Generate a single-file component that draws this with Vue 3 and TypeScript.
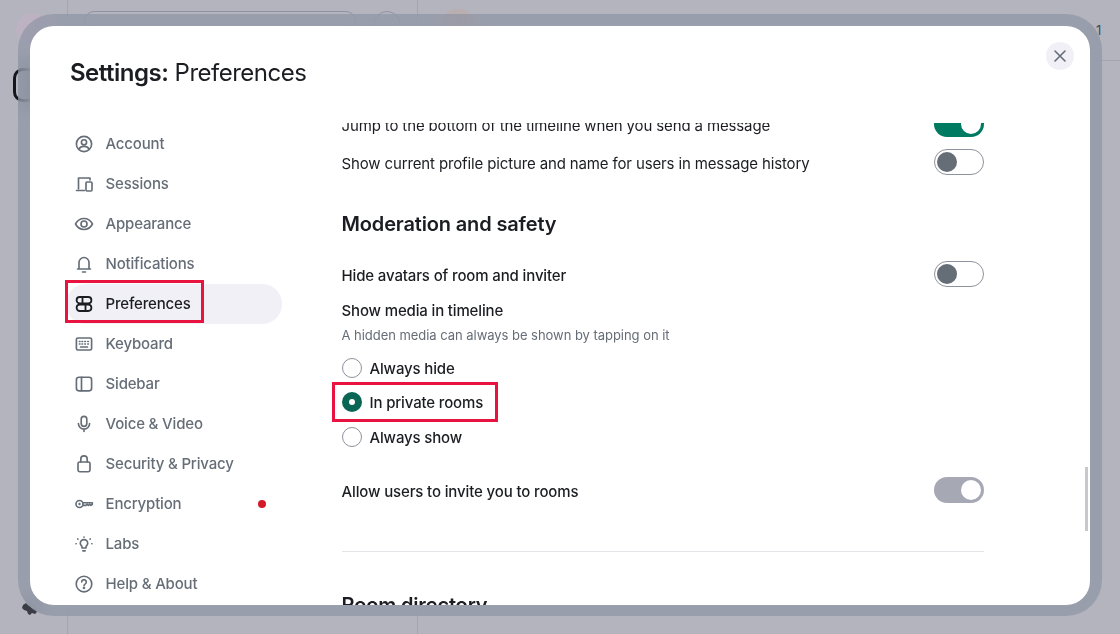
<script setup lang="ts">
interface NavItem { label: string; icon: string; active?: boolean; dot?: boolean }
const nav: NavItem[] = [
  { label: 'Account', icon: 'account' },
  { label: 'Sessions', icon: 'sessions' },
  { label: 'Appearance', icon: 'eye' },
  { label: 'Notifications', icon: 'bell' },
  { label: 'Preferences', icon: 'prefs', active: true },
  { label: 'Keyboard', icon: 'keyboard' },
  { label: 'Sidebar', icon: 'sidebar' },
  { label: 'Voice & Video', icon: 'mic' },
  { label: 'Security & Privacy', icon: 'lock' },
  { label: 'Encryption', icon: 'key', dot: true },
  { label: 'Labs', icon: 'bulb' },
  { label: 'Help & About', icon: 'help' },
]
</script>

<template>
  <div class="page">
    <div class="backdrop">
      <span class="vline one"></span>
      <span class="vline two"></span>
      <span class="hline"></span>
      <span class="count">1</span>
      <span class="blackbox"></span>
      <span class="searchbox"></span>
      <span class="roundbtn"></span>
      <span class="avatar-pink"></span>
      <span class="avatar-tan"></span>
      <svg class="gear" width="18" height="16" viewBox="0 0 18 16"><path d="M1 3l3-2 2 2 2 1 2 2 3 1 2 3-2 2-3-1-2 2-2-1-1-3-3-1-2-2z" fill="#3a3d45"/></svg>
    </div>

    <div class="frame">
      <section class="dialog">
        <h1 class="title"><strong>Settings:</strong> Preferences</h1>
        <button class="close" aria-label="Close">
          <svg width="12" height="12" viewBox="0 0 12 12"><path d="M1 1l10 10M11 1L1 11" stroke="#656d77" stroke-width="1.6" stroke-linecap="round"/></svg>
        </button>

        <div class="body">
          <nav class="nav">
            <div v-for="item in nav" :key="item.label" class="nav-item" :class="{ active: item.active }">
              <svg class="nav-icon" width="20" height="20" viewBox="0 0 20 20" fill="none" stroke="currentColor" stroke-width="1.65" stroke-linecap="round" stroke-linejoin="round">
                <template v-if="item.icon === 'account'">
                  <circle cx="10" cy="10" r="7.600"/><circle cx="10" cy="8.300" r="2.600"/><path d="M4.900 15.200c1-2 3-2.800 5.100-2.800s4.100.8 5.100 2.800"/>
                </template>
                <template v-else-if="item.icon === 'sessions'">
                  <path d="M4.500 15V4h11.500v2"/><path d="M2.500 16.500h8"/><rect x="12" y="8" width="6" height="9" rx="1"/>
                </template>
                <template v-else-if="item.icon === 'eye'">
                  <path d="M1.500 10C3.500 6.300 6.500 4.500 10 4.500s6.500 1.800 8.500 5.500c-2 3.700-5 5.500-8.500 5.500S3.500 13.700 1.500 10z"/><circle cx="10" cy="10" r="3"/>
                </template>
                <template v-else-if="item.icon === 'bell'">
                  <path d="M3.500 15h13M5 15V8.500a5 5 0 0 1 10 0V15"/><path d="M8.500 18h3"/>
                </template>
                <template v-else-if="item.icon === 'prefs'">
                  <rect x="2.600" y="3" width="14.800" height="6.400" rx="3.200" stroke-width="1.800"/><rect x="2.600" y="10.600" width="14.800" height="6.400" rx="3.200" stroke-width="1.800"/><path d="M8.500 3.200v6M11.500 10.800v6" stroke-width="1.800"/>
                </template>
                <template v-else-if="item.icon === 'keyboard'">
                  <rect x="2.400" y="4" width="15.200" height="12" rx="1.600"/><path d="M5.400 7.500h.6M8 7.500h.6M10.800 7.500h.6M13.800 7.500h.6M5.400 10h.6M8 10h.6M10.800 10h.6M13.800 10h.6M6.500 13h7"/>
                </template>
                <template v-else-if="item.icon === 'sidebar'">
                  <rect x="2.400" y="3.200" width="15.200" height="13.600" rx="2.500"/><path d="M7.500 3.200v13.600"/>
                </template>
                <template v-else-if="item.icon === 'mic'">
                  <rect x="7.200" y="2.400" width="5.600" height="10" rx="2.800"/><path d="M4.400 9.500a5.600 5.600 0 0 0 11.200 0M10 15.200v2.300"/>
                </template>
                <template v-else-if="item.icon === 'lock'">
                  <rect x="4" y="8" width="12" height="9.700" rx="1.600"/><path d="M6.800 8V5a3.200 3.200 0 0 1 6.400 0v3"/>
                </template>
                <template v-else-if="item.icon === 'key'">
                  <circle cx="5.500" cy="10" r="3.500"/><circle cx="5.500" cy="10" r="1.200" fill="currentColor" stroke="none"/><path d="M9 8.700h9.300v1.700l-1.300 1-1.300-1-1.300 1-1.300-1-1.200 1H9"/>
                </template>
                <template v-else-if="item.icon === 'bulb'">
                  <path d="M8 14v-1.200c0-1-1.700-1.500-1.700-3.500a3.700 3.700 0 0 1 7.400 0c0 2-1.700 2.500-1.700 3.500V14z"/><path d="M8.800 16.800h2.400M10 3v.2M3.700 5l.2.200M16.300 5l-.2.200M2 9.700h.2M17.800 9.700h.2"/>
                </template>
                <template v-else>
                  <circle cx="10" cy="10" r="7.800"/><path d="M7.700 8a2.300 2.300 0 1 1 3.600 1.900c-.8.500-1.300 1-1.300 1.900"/><circle cx="10" cy="14" r=".5" fill="currentColor"/>
                </template>
              </svg>
              <span class="nav-label">{{ item.label }}</span>
              <span v-if="item.dot" class="dot"></span>
            </div>
            <span class="mark mark-nav"></span>
          </nav>

          <div class="scroll">
            <div class="content">
              <div class="row jump">
                <span>Jump to the bottom of the timeline when you send a message</span>
                <span class="toggle on"><i></i></span>
              </div>
              <div class="row profile">
                <span>Show current profile picture and name for users in message history</span>
                <span class="toggle off"><i></i></span>
              </div>

              <h2 class="heading">Moderation and safety</h2>

              <div class="row avatars">
                <span>Hide avatars of room and inviter</span>
                <span class="toggle off"><i></i></span>
              </div>

              <div class="group-label">Show media in timeline</div>
              <div class="group-hint">A hidden media can always be shown by tapping on it</div>

              <div class="radio hide"><span class="circle"></span>Always hide</div>
              <div class="radio private"><span class="circle checked"></span>In private rooms<span class="mark mark-radio"></span></div>
              <div class="radio show"><span class="circle"></span>Always show</div>

              <div class="row invite">
                <span>Allow users to invite you to rooms</span>
                <span class="toggle grey"><i></i></span>
              </div>

              <hr class="rule" />
              <h2 class="heading directory">Room directory</h2>
            </div>
          </div>
        </div>
        <span class="scrollbar"></span>
      </section>
    </div>
  </div>
</template>

<style>
html, body { margin: 0; padding: 0; background: #b4b4be; }
</style>

<style scoped>
.page {
  position: relative;
  width: 1120px;
  height: 634px;
  overflow: hidden;
  background: #b4b4be;
  font-family: Inter, "Liberation Sans", sans-serif;
  color: #1b1d22;
}
.backdrop { position: absolute; inset: 0; }
.vline { position: absolute; top: 0; bottom: 0; width: 1px; background: #a3a6b2; }
.vline.one { left: 67px; }
.vline.two { left: 417px; }
.hline { position: absolute; left: 417px; right: 0; top: 60px; height: 1px; background: #a3a6b2; }
.count { position: absolute; left: 1096px; top: 22px; font-size: 13px; color: #3d4a63; }
.blackbox { position: absolute; left: 13px; top: 68px; width: 24px; height: 34px; border: 3px solid #14161b; border-radius: 10px; box-sizing: border-box; }
.searchbox { position: absolute; left: 84px; top: 11px; width: 272px; height: 28px; border: 1px solid #8f94a3; border-radius: 10px; box-sizing: border-box; }
.roundbtn { position: absolute; left: 373px; top: 11px; width: 28px; height: 28px; border: 1px solid #8f94a3; border-radius: 50%; box-sizing: border-box; }
.avatar-pink { position: absolute; left: 16px; top: 13px; width: 32px; height: 32px; border-radius: 50%; background: #bdb2c2; }
.avatar-tan { position: absolute; left: 440px; top: 9px; width: 36px; height: 36px; border-radius: 50%; background: #b9aeb0; }
.gear { position: absolute; left: 22px; top: 602px; }
.frame {
  position: absolute;
  left: 18px;
  top: 14px;
  width: 1084px;
  height: 602px;
  box-sizing: border-box;
  padding: 12px 12px 11px;
  background: rgba(132, 140, 158, 0.55);
  backdrop-filter: blur(10px);
  border-radius: 36px;
  display: flex;
}
.dialog {
  position: relative;
  flex: 1;
  min-width: 0;
  background: #fff;
  border-radius: 24px;
  overflow: hidden;
  display: flex;
  flex-direction: column;
}
.title {
  margin: 0;
  padding: 31px 0 0 40px;
  font-size: 24px;
  line-height: 31px;
  font-weight: 400;
  letter-spacing: -0.5px;
  color: #1b1d22;
}
.title strong { font-weight: 600; }
.close {
  position: absolute;
  right: 16px;
  top: 16px;
  width: 28px;
  height: 28px;
  padding: 0;
  border: 0;
  border-radius: 50%;
  background: #f1f0f7;
  display: flex;
  align-items: center;
  justify-content: center;
}
.body { display: flex; flex: 1; min-height: 0; padding-top: 36px; }
.nav {
  position: relative;
  width: 252px;
  margin-left: 36px;
  flex: none;
  display: flex;
  flex-direction: column;
}
.nav-item {
  height: 40px;
  flex: none;
  display: flex;
  align-items: center;
  padding-left: 8px;
  width: 216px;
  box-sizing: border-box;
  border-radius: 20px;
  color: #656d77;
  font-size: 15px;
  font-weight: 500;
  letter-spacing: -0.17px;
}
.nav-item.active { background: #f0f0f6; color: #1b1d22; }
.nav-icon { flex: none; }
.nav-label { margin-left: 11.5px; margin-bottom: 1px; }
.dot { width: 8px; height: 8px; border-radius: 50%; background: #d51928; margin-left: auto; margin-right: 16px; }
.mark { position: absolute; border: 3px solid #e8133f; box-sizing: border-box; pointer-events: none; }
.mark-nav { left: -1px; top: 156px; width: 139px; height: 43px; }
.scroll { flex: 1; min-width: 0; overflow: hidden; margin-top: -1px; }
.content { width: 642px; margin-left: 23.5px; margin-top: -11px; font-size: 15px; letter-spacing: -0.135px; color: #1b1d22; }
.row { display: flex; justify-content: space-between; align-items: center; }
.row > span:first-child { padding-top: 3px; }
.jump { height: 24px; }
.profile { height: 24px; margin-top: 14px; }
.toggle {
  position: relative;
  flex: none;
  width: 50px;
  height: 26px;
  box-sizing: border-box;
  border-radius: 13px;
  display: block;
}
.toggle i { position: absolute; top: 3px; width: 20px; height: 20px; border-radius: 50%; }
.toggle.on { background: #007a61; }
.toggle.on i, .toggle.grey i { right: 3px; background: #fff; }
.toggle.off { border: 1px solid #8e929c; background: #fff; }
.toggle.off i { left: 2px; top: 2px; background: #656d77; }
.toggle.grey { background: #a6a8b4; }
.heading { margin: 0; font-size: 20px; line-height: 26px; font-weight: 600; letter-spacing: -0.15px; color: #1b1d22; }
.content > .heading { margin-top: 37px; }
.avatars { height: 24px; margin-top: 25px; font-weight: 500; }
.group-label { margin-top: 15px; font-weight: 500; line-height: 20px; letter-spacing: -0.15px; }
.group-hint { margin-top: 5px; font-size: 13px; line-height: 18px; letter-spacing: -0.04px; color: #656d77; }
.radio { position: relative; display: flex; align-items: center; gap: 8px; height: 20px; font-weight: 500; letter-spacing: -0.15px; }
.radio.hide { margin-top: 14px; }
.radio.private { margin-top: 14px; }
.radio.show { margin-top: 15px; }
.circle { width: 20px; height: 20px; box-sizing: border-box; border: 1px solid #8e929c; border-radius: 50%; background: #fff; flex: none; }
.circle.checked { background: #0a6654; border: 0; position: relative; }
.circle.checked::after { content: ""; position: absolute; left: 7px; top: 7px; width: 6px; height: 6px; border-radius: 50%; background: #fff; }
.mark-radio { left: -10px; top: -10px; width: 166px; height: 40px; }
.invite { height: 26px; margin-top: 30px; font-weight: 500; }
.rule { border: 0; height: 1px; background: #e4e5e9; margin: 48px 0 0; }
.content > .directory { margin-top: 40px; }
.scrollbar { position: absolute; left: 1055px; top: 441px; width: 3px; height: 64px; background: #c8c8cc; }
</style>
